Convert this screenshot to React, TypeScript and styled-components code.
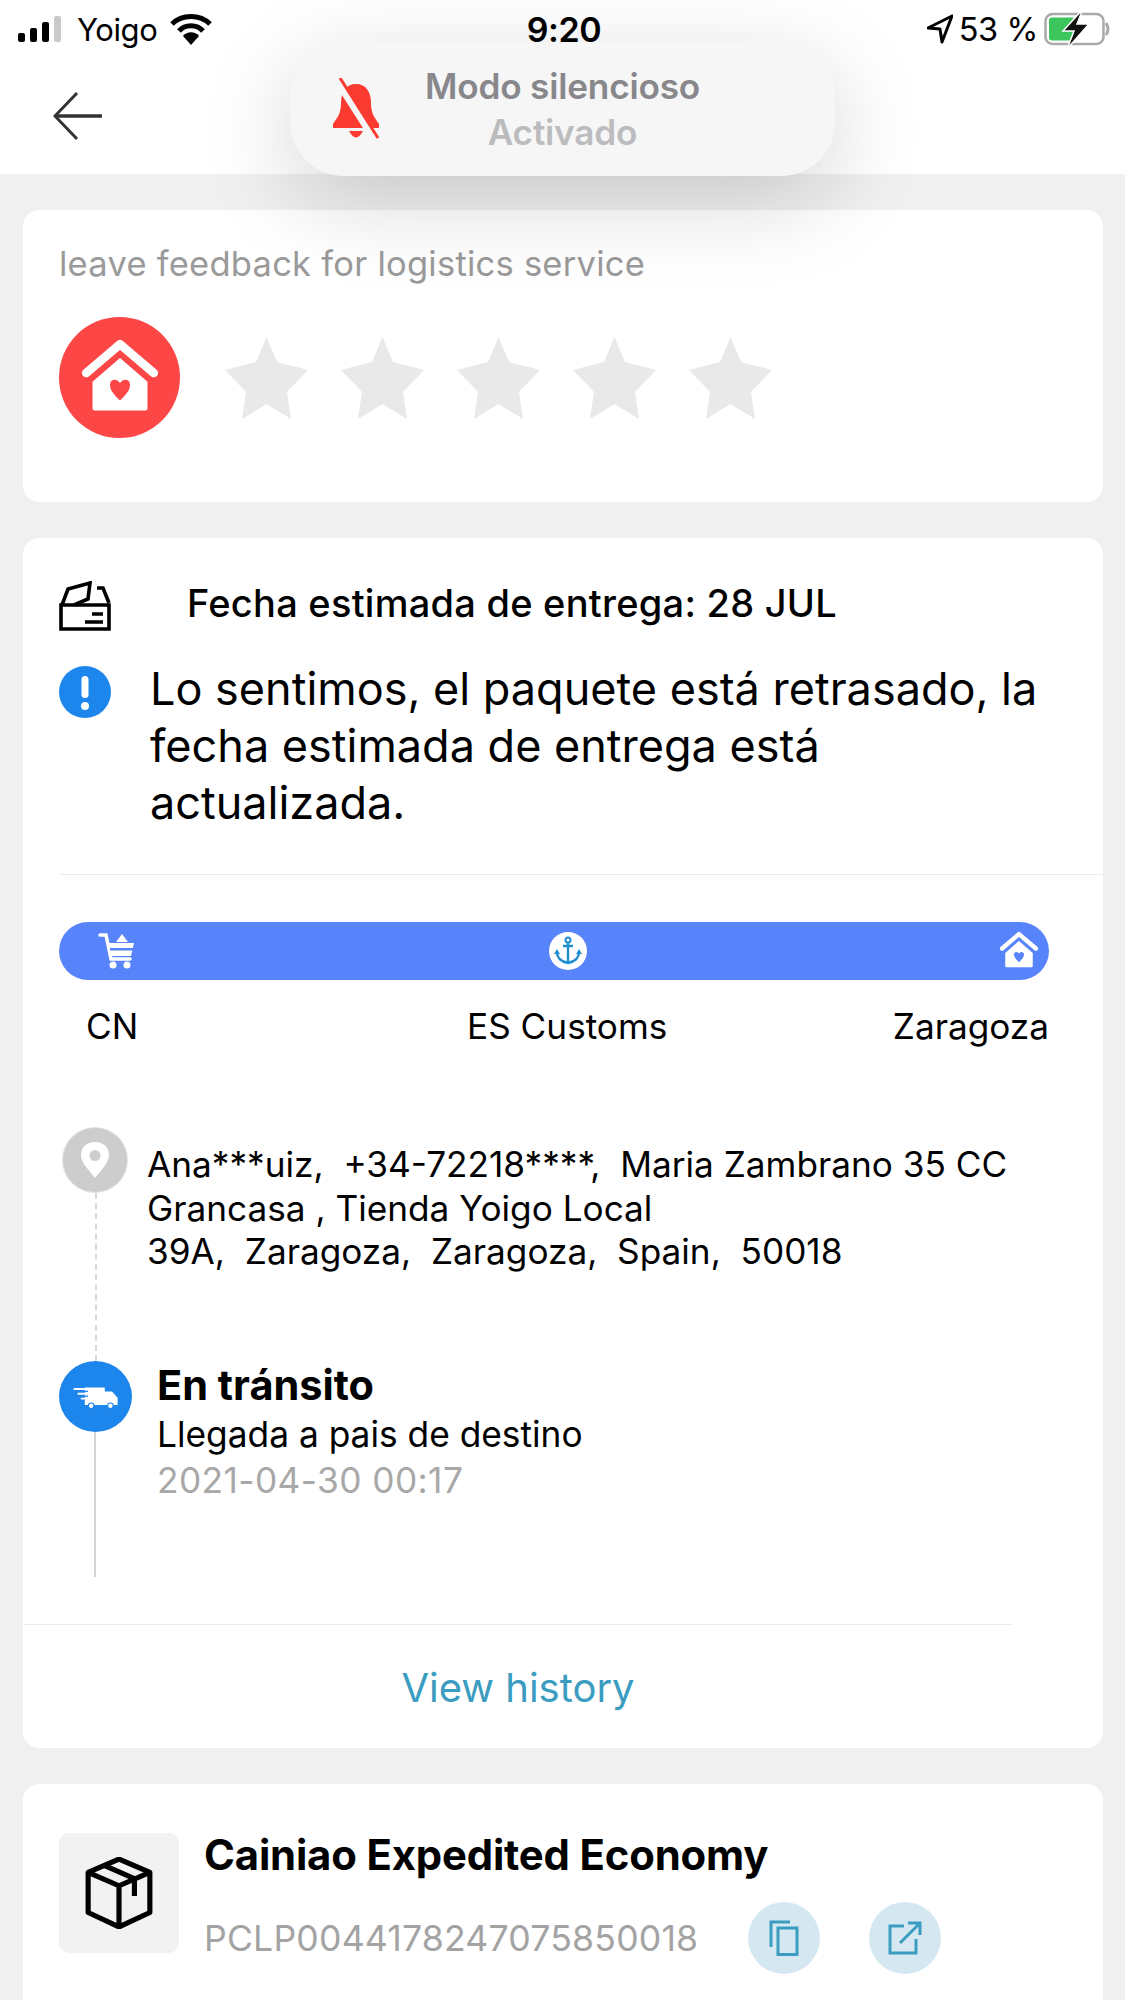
import React from "react";
import styled, { createGlobalStyle } from "styled-components";

const Global = createGlobalStyle`
  html, body { margin: 0; padding: 0; background: #f0f0f0; }
  body { font-family: Inter, "Noto Sans", "Liberation Sans", sans-serif; color: #000; }
  * { box-sizing: border-box; }
`;

const Page = styled.div`
  position: relative;
  width: 1125px;
  height: 2000px;
  overflow: hidden;
  background: #f0f0f0;
`;

const Header = styled.header`
  height: 174px;
  background: #fff;
  display: flex;
  flex-direction: column;
`;

const StatusBar = styled.div`
  height: 58px;
  padding: 0 15px 0 18px;
  display: grid;
  grid-template-columns: 1fr auto 1fr;
  align-items: center;
  font-size: 31px;
  letter-spacing: -0.4px;
`;

const StatusLeft = styled.div`
  display: flex;
  align-items: center;
  gap: 13px;
`;

const StatusRight = styled.div`
  display: flex;
  align-items: center;
  justify-content: flex-end;
  gap: 6px;
  font-size: 32.5px;
`;

const Clock = styled.div`
  font-weight: 600;
  font-size: 34px;
`;

const NavRow = styled.div`
  flex: 1;
  padding-left: 53px;
  display: flex;
  align-items: center;
`;

const Toast = styled.div`
  position: absolute;
  left: 290px;
  top: 42px;
  width: 545px;
  height: 134px;
  border-radius: 54px;
  background: #f6f6f7;
  box-shadow: 0 24px 90px rgba(0, 0, 0, 0.17);
  display: flex;
  align-items: center;
  justify-content: center;
`;

const ToastBell = styled.div`
  position: absolute;
  left: 40px;
  top: 50%;
  transform: translateY(-50%);
  display: flex;
`;

const ToastText = styled.div`
  display: flex;
  flex-direction: column;
  align-items: center;
  gap: 7px;
  font-size: 35.2px;
  font-weight: 600;
  line-height: 39px;
  letter-spacing: -0.2px;
`;

const ToastTitle = styled.div`
  color: #88888c;
`;

const ToastSub = styled.div`
  color: #bcbcbe;
`;

const Content = styled.main`
  padding: 36px 22px 0 23px;
  display: flex;
  flex-direction: column;
  gap: 36px;
`;

const Card = styled.section`
  background: #fff;
  border-radius: 16px;
  padding-left: 36px;
`;

const FeedbackCard = styled(Card)`
  height: 292px;
  padding-top: 32px;
`;

const FeedbackTitle = styled.div`
  font-size: 34.5px;
  line-height: 44px;
  color: #9a9a9a;
  letter-spacing: 0.25px;
`;

const RatingRow = styled.div`
  margin-top: 31px;
  display: flex;
  align-items: center;
  gap: 45px;
`;

const Avatar = styled.div`
  width: 121px;
  height: 121px;
  border-radius: 50%;
  background: #fd4747;
  display: flex;
  align-items: center;
  justify-content: center;
`;

const Stars = styled.div`
  display: flex;
  gap: 33px;
  margin-top: 1px;
`;

const DeliveryCard = styled(Card)`
  height: 1210px;
  padding-top: 37px;
`;

const EstimateRow = styled.div`
  display: flex;
  align-items: center;
  height: 56px;
`;

const EstimateIcon = styled.div`
  display: flex;
  margin-top: 6px;
`;

const EstimateText = styled.div`
  margin-left: 76px;
  font-size: 38px;
  font-weight: 500;
  letter-spacing: 0.25px;
`;

const NoticeRow = styled.div`
  margin-top: 25px;
  display: flex;
  align-items: flex-start;
  gap: 39px;
`;

const NoticeIcon = styled.div`
  flex: none;
  display: flex;
  margin-top: 10px;
`;

const NoticeText = styled.div`
  width: 920px;
  margin-top: 4px;
  font-size: 45px;
  line-height: 57px;
`;

const Rule = styled.div`
  margin-top: 43px;
  height: 1px;
  background: #ececec;
`;

const RouteBar = styled.div`
  margin-top: 47px;
  width: 990px;
  height: 58px;
  border-radius: 29px;
  background: #5884fb;
  padding: 0 10px 0 39px;
  display: flex;
  align-items: center;
  justify-content: space-between;
`;

const RouteLabels = styled.div`
  width: 990px;
  margin-top: 24px;
  padding-left: 27px;
  display: grid;
  grid-template-columns: 381px 1fr auto;
  font-size: 35.2px;
  line-height: 44px;
`;

const Timeline = styled.div`
  margin-top: 79px;
  display: flex;
  flex-direction: column;
`;

const AddressRow = styled.div`
  position: relative;
  height: 234px;
  padding-left: 88px;
`;

const AddressText = styled.div`
  padding-top: 16px;
  font-size: 35.2px;
  line-height: 43.5px;
  white-space: pre;
`;

const PinDot = styled.div`
  position: absolute;
  left: 4px;
  top: 1px;
  width: 64px;
  height: 64px;
  border-radius: 50%;
  background: #cdcdcd;
  box-shadow: 0 0 0 1px #e4e4e4;
  display: flex;
  align-items: center;
  justify-content: center;
`;

const DashedLine = styled.div`
  position: absolute;
  left: 36px;
  top: 66px;
  bottom: 0;
  border-left: 2px dashed #d8d8d8;
`;

const TransitRow = styled.div`
  position: relative;
  height: 216px;
  padding-left: 98px;
`;

const TruckDot = styled.div`
  position: absolute;
  left: 0;
  top: 0;
  width: 73px;
  height: 71px;
  border-radius: 50%;
  background: #1d86ec;
  display: flex;
  align-items: center;
  justify-content: center;
`;

const SolidLine = styled.div`
  position: absolute;
  left: 35px;
  top: 71px;
  bottom: 0;
  width: 2px;
  background: #d2d2d2;
`;

const TransitTitle = styled.div`
  font-size: 41.5px;
  line-height: 48px;
  font-weight: 700;
`;

const TransitBody = styled.div`
  margin-top: 4px;
  font-size: 35.3px;
  line-height: 44px;
`;

const TransitDate = styled.div`
  margin-top: 2px;
  font-size: 35.3px;
  line-height: 44px;
  color: #a8a8a8;
  letter-spacing: 0.4px;
`;

const WideRule = styled.div`
  margin: 47px 0 0 -36px;
  width: 990px;
  height: 1px;
  background: #ececec;
`;

const HistoryLink = styled.div`
  margin: 38px 0 0 -36px;
  width: 990px;
  text-align: center;
  font-size: 40px;
  line-height: 50px;
  color: #3a9cc0;
`;

const CarrierCard = styled(Card)`
  height: 240px;
  padding-top: 49px;
  display: flex;
  align-items: flex-start;
`;

const PackageBox = styled.div`
  flex: none;
  width: 120px;
  height: 120px;
  border-radius: 10px;
  background: #f2f2f2;
  display: flex;
  align-items: center;
  justify-content: center;
`;

const CarrierInfo = styled.div`
  margin-left: 25px;
  margin-top: -3px;
`;

const CarrierName = styled.div`
  font-size: 41.8px;
  line-height: 50px;
  font-weight: 700;
  letter-spacing: -0.15px;
`;

const TrackingRow = styled.div`
  margin-top: 22px;
  display: flex;
  align-items: center;
`;

const TrackingNo = styled.div`
  width: 544px;
  font-size: 35.6px;
  color: #a3a3a3;
  letter-spacing: 0.2px;
`;

const RoundButton = styled.div`
  width: 72px;
  height: 72px;
  border-radius: 50%;
  background: #d5e8f2;
  margin-right: 49px;
  display: flex;
  align-items: center;
  justify-content: center;
`;

const Star = () => (
  <svg width="83" height="82" viewBox="0 0 83 82">
    <polygon points="41.5,0 52,25 83,33 62,55 66,82 41.5,67 17,82 21,55 0,33 31,25" fill="#e8e9e8" />
  </svg>
);

const HomeHeart = ({ size, house, heart }: { size: number; house: string; heart: string }) => (
  <svg width={size} height={size} viewBox="0 0 64 64">
    <path d="M5 28 L32 5 L59 28" fill="none" stroke={house} strokeWidth="7" strokeLinecap="round" strokeLinejoin="round" />
    <path d="M10 35 L32 16 L54 35 V56 Q54 58 52 58 H12 Q10 58 10 56 Z" fill={house} />
    <path d="M32 50 C26 44 24 41 24 37.5 C24 33 29 32 32 36 C35 32 40 33 40 37.5 C40 41 38 44 32 50 Z" fill={heart} />
  </svg>
);

export default function App() {
  return (
    <Page>
      <Global />
      <Header>
        <StatusBar>
          <StatusLeft>
            <svg width="46" height="26" viewBox="0 0 46 26">
              <rect x="0" y="17" width="7" height="9" rx="2" fill="#000" />
              <rect x="12" y="12" width="7" height="14" rx="2" fill="#000" />
              <rect x="24" y="6" width="7" height="20" rx="2" fill="#000" />
              <rect x="36" y="0" width="7" height="26" rx="2" fill="#c9c9c9" />
            </svg>
            <span>Yoigo</span>
            <svg width="42" height="32" viewBox="0 0 42 32">
              <path d="M2 11 C12 1 30 1 40 11" fill="none" stroke="#000" strokeWidth="5" />
              <path d="M9 18 C15 11 27 11 33 18" fill="none" stroke="#000" strokeWidth="5" />
              <path d="M21 32 L13 23 C17 18 25 18 29 23 Z" fill="#000" />
            </svg>
          </StatusLeft>
          <Clock>9:20</Clock>
          <StatusRight>
            <svg width="26" height="30" viewBox="0 0 26 30">
              <path d="M25 2 L1 14 L13 15 L15 28 Z" fill="none" stroke="#000" strokeWidth="3" strokeLinejoin="round" />
            </svg>
            <span>53 %</span>
            <svg width="66" height="40" viewBox="0 0 66 40">
              <rect x="1.5" y="5" width="58" height="30" rx="7" fill="none" stroke="#aaa" strokeWidth="2.5" />
              <rect x="5" y="8.5" width="26" height="23" rx="3" fill="#3bc55c" />
              <path d="M62 14 Q66 20 62 26" fill="none" stroke="#aaa" strokeWidth="3" />
              <path d="M39 0 L19 22 H30 L23 40 L45 15 H33 Z" fill="#111" stroke="#fff" strokeWidth="1.5" />
            </svg>
          </StatusRight>
        </StatusBar>
        <NavRow>
          <svg width="50" height="50" viewBox="0 0 50 50">
            <path d="M24 2 L2 25 L24 48" fill="none" stroke="#333" strokeWidth="3" />
            <path d="M2 25 H49" stroke="#333" strokeWidth="3.5" />
          </svg>
        </NavRow>
      </Header>

      <Toast>
        <ToastBell>
          <svg width="52" height="62" viewBox="0 0 52 62">
            <path d="M26 6 C16 6 11 14 11 25 C11 36 7 40 3 46 V50 H49 V46 C45 40 41 36 41 25 C41 14 36 6 26 6 Z" fill="#fb3b30" />
            <path d="M19 53 Q26 66 33 53 Z" fill="#fb3b30" />
            <path d="M6 0 L44 60" stroke="#f6f6f7" strokeWidth="8" />
            <path d="M10 0 L48 60" stroke="#fb3b30" strokeWidth="3" />
          </svg>
        </ToastBell>
        <ToastText>
          <ToastTitle>Modo silencioso</ToastTitle>
          <ToastSub>Activado</ToastSub>
        </ToastText>
      </Toast>

      <Content>
        <FeedbackCard>
          <FeedbackTitle>leave feedback for logistics service</FeedbackTitle>
          <RatingRow>
            <Avatar>
              <HomeHeart size={80} house="#fff" heart="#fd4747" />
            </Avatar>
            <Stars>
              <Star />
              <Star />
              <Star />
              <Star />
              <Star />
            </Stars>
          </RatingRow>
        </FeedbackCard>

        <DeliveryCard>
          <EstimateRow>
            <EstimateIcon>
              <svg width="52" height="50" viewBox="0 0 52 50">
                <path d="M2 24 H50 V48 H2 Z" fill="none" stroke="#000" strokeWidth="3.6" />
                <path d="M3 24 L9 8 L31 2 L29 18 L15 24" fill="none" stroke="#000" strokeWidth="3.6" />
                <path d="M38 7 H44 L50 22" fill="none" stroke="#000" strokeWidth="3.6" />
                <path d="M33 33 H44 M26 41 H44" stroke="#000" strokeWidth="3.6" />
              </svg>
            </EstimateIcon>
            <EstimateText>Fecha estimada de entrega: 28 JUL</EstimateText>
          </EstimateRow>
          <NoticeRow>
            <NoticeIcon>
              <svg width="52" height="52" viewBox="0 0 52 52">
                <circle cx="26" cy="26" r="26" fill="#1d86ec" />
                <rect x="22.5" y="10" width="7" height="22" rx="3.5" fill="#fff" />
                <circle cx="26" cy="40" r="4" fill="#fff" />
              </svg>
            </NoticeIcon>
            <NoticeText>Lo sentimos, el paquete está retrasado, la fecha estimada de entrega está actualizada.</NoticeText>
          </NoticeRow>
          <Rule />
          <RouteBar>
            <svg width="38" height="38" viewBox="0 0 38 38">
              <path d="M2 3 H8 L13 27 H32" fill="none" stroke="#fff" strokeWidth="3.5" strokeLinecap="round" />
              <path d="M10 11 H36 L33 24 H13 Z" fill="#fff" />
              <path d="M12 16 H35 V18.5 H12 Z" fill="#5884fb" />
              <path d="M24 2 L30 10 H18 Z" fill="#fff" />
              <circle cx="15" cy="33" r="3.5" fill="#fff" />
              <circle cx="29" cy="33" r="3.5" fill="#fff" />
            </svg>
            <svg width="38" height="38" viewBox="0 0 38 38">
              <circle cx="19" cy="19" r="19" fill="#fff" />
              <circle cx="19" cy="8" r="2.5" fill="none" stroke="#1f8fd0" strokeWidth="2" />
              <path d="M19 10 V31 M14 14 H24 M8 20 C8 27 14 30 19 31 C24 30 30 27 30 20" fill="none" stroke="#1f8fd0" strokeWidth="2.4" />
              <path d="M5 22 L8 17 L11 22 Z M27 22 L30 17 L33 22 Z" fill="#1f8fd0" />
            </svg>
            <HomeHeart size={40} house="#fff" heart="#5884fb" />
          </RouteBar>
          <RouteLabels>
            <span>CN</span>
            <span>ES Customs</span>
            <span>Zaragoza</span>
          </RouteLabels>
          <Timeline>
            <AddressRow>
              <PinDot>
                <svg width="28" height="36" viewBox="0 0 28 36">
                  <path fillRule="evenodd" d="M14 36 C8 28 0 21 0 13 C0 5 6 0 14 0 C22 0 28 5 28 13 C28 21 20 28 14 36 Z M14 8 A5.5 5.5 0 1 0 14 19 A5.5 5.5 0 1 0 14 8 Z" fill="#fff" />
                </svg>
              </PinDot>
              <DashedLine />
              <AddressText>{"Ana***uiz,  +34-72218****,  Maria Zambrano 35 CC\nGrancasa , Tienda Yoigo Local\n39A,  Zaragoza,  Zaragoza,  Spain,  50018"}</AddressText>
            </AddressRow>
            <TransitRow>
              <TruckDot>
                <svg width="46" height="24" viewBox="0 0 56 30">
                  <path d="M14 3 H39 V8 H48 L55 16 V25 H14 Z" fill="#fff" />
                  <circle cx="22" cy="26" r="3.5" fill="#fff" stroke="#1d86ec" strokeWidth="1.5" />
                  <circle cx="46" cy="26" r="3.5" fill="#fff" stroke="#1d86ec" strokeWidth="1.5" />
                  <path d="M0 5 H14 M5 11 H18 M9 17 H18" stroke="#fff" strokeWidth="2.4" />
                  <path d="M4 8 H18 M6 14 H18" stroke="#1d86ec" strokeWidth="1.6" />
                </svg>
              </TruckDot>
              <SolidLine />
              <TransitTitle>En tránsito</TransitTitle>
              <TransitBody>Llegada a pais de destino</TransitBody>
              <TransitDate>2021-04-30 00:17</TransitDate>
            </TransitRow>
          </Timeline>
          <WideRule />
          <HistoryLink>View history</HistoryLink>
        </DeliveryCard>

        <CarrierCard>
          <PackageBox>
            <svg width="72" height="72" viewBox="0 0 70 70">
              <path d="M35 2 L65 15 V54 L35 68 L5 54 V15 Z" fill="none" stroke="#000" strokeWidth="5" strokeLinejoin="round" />
              <path d="M5 15 L35 28 L65 15 M35 28 V68" fill="none" stroke="#000" strokeWidth="5" />
              <path d="M20 8 L50 21 V38" fill="none" stroke="#000" strokeWidth="5" />
            </svg>
          </PackageBox>
          <CarrierInfo>
            <CarrierName>Cainiao Expedited Economy</CarrierName>
            <TrackingRow>
              <TrackingNo>PCLP0044178247075850018</TrackingNo>
              <RoundButton>
                <svg width="30" height="36" viewBox="0 0 30 36">
                  <path d="M9 34.5 H28 V8 H9 Z" fill="none" stroke="#3a9cc0" strokeWidth="3" />
                  <path d="M2 27 V2 H21" fill="none" stroke="#3a9cc0" strokeWidth="3" />
                </svg>
              </RoundButton>
              <RoundButton>
                <svg width="34" height="34" viewBox="0 0 34 34">
                  <path d="M16 5 H2 V32 H28 V18" fill="none" stroke="#3a9cc0" strokeWidth="3" />
                  <path d="M12 22 L31 3 M20 2 H32 V14" fill="none" stroke="#3a9cc0" strokeWidth="3" />
                </svg>
              </RoundButton>
            </TrackingRow>
          </CarrierInfo>
        </CarrierCard>
      </Content>
    </Page>
  );
}
